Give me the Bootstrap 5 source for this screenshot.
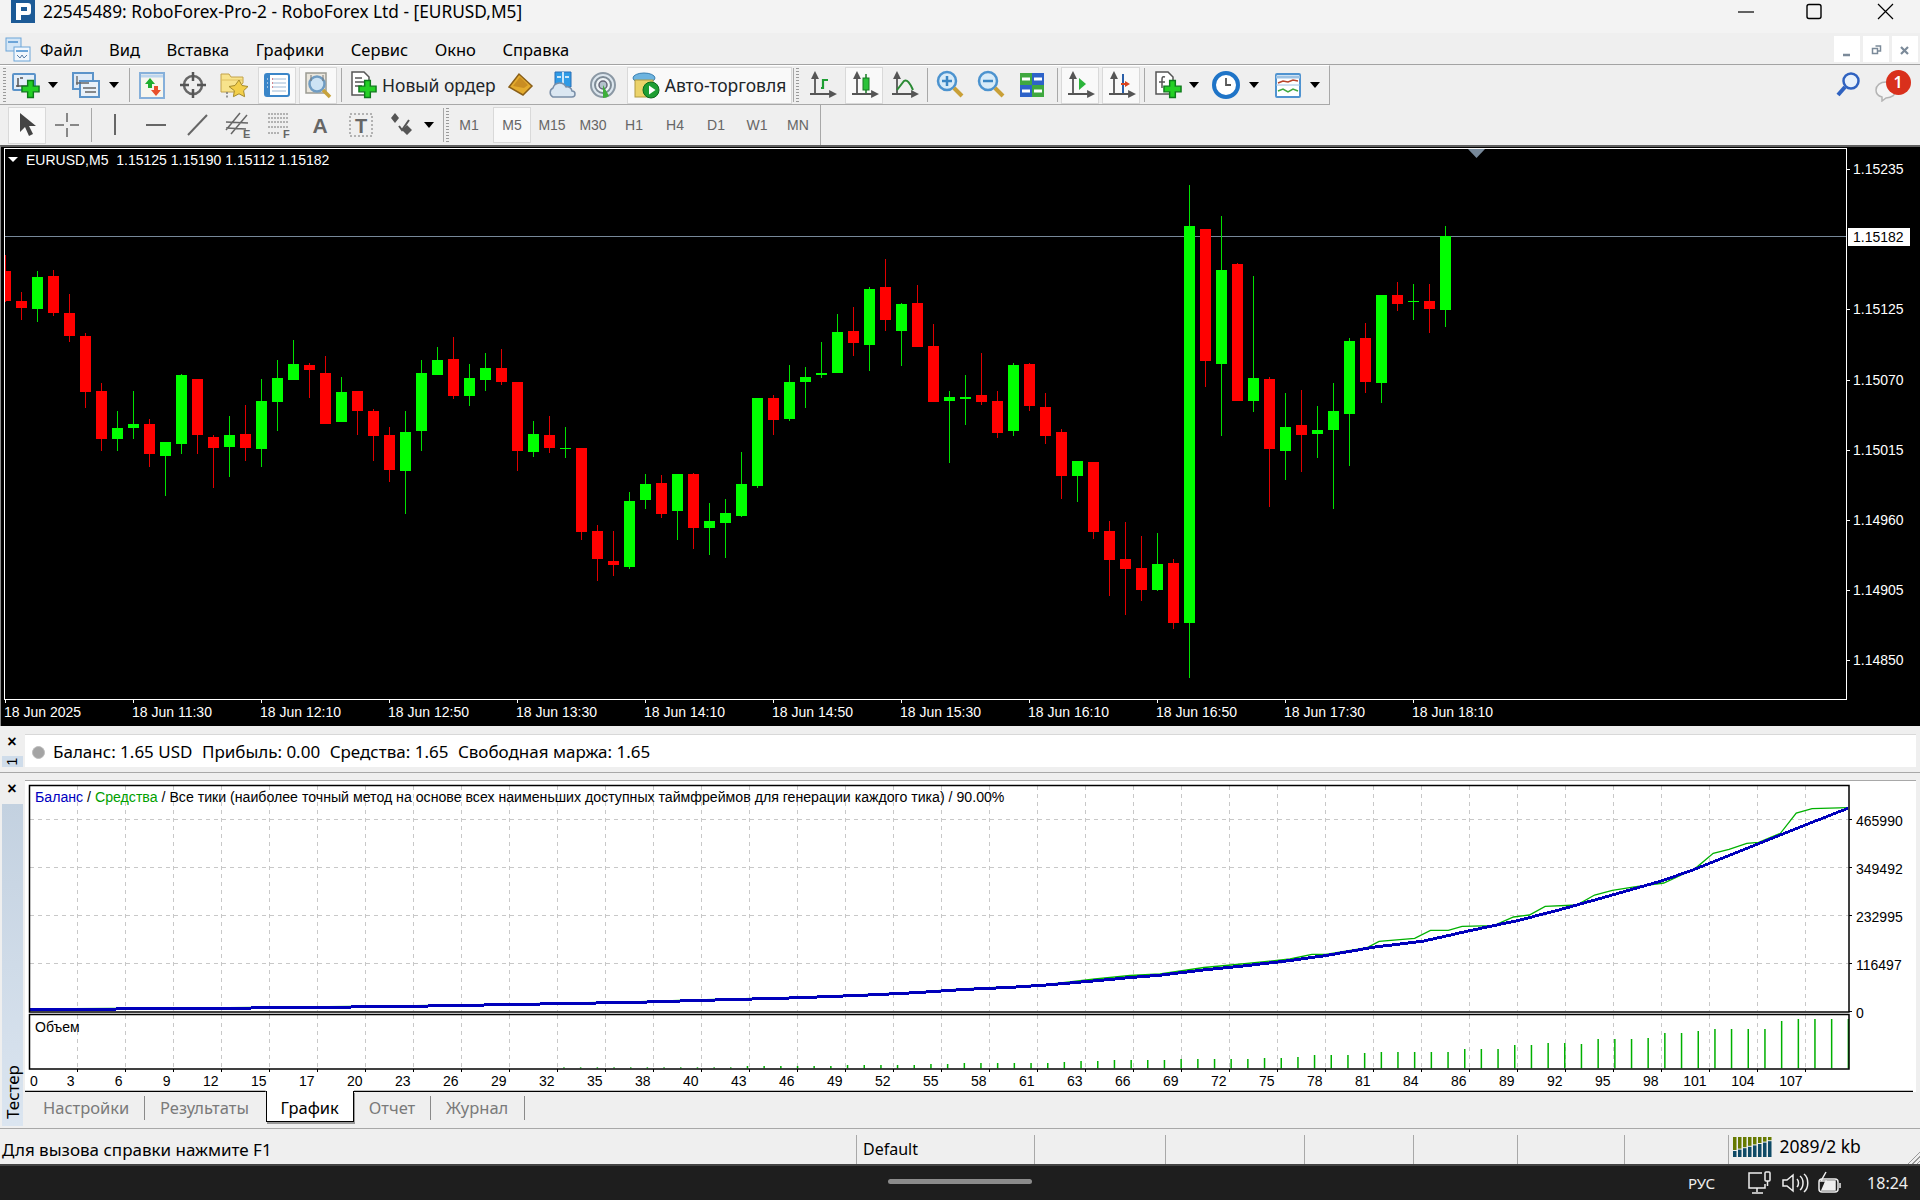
<!DOCTYPE html>
<html lang="ru">
<head>
<meta charset="UTF-8">
<title>22545489: RoboForex-Pro-2 - RoboForex Ltd - [EURUSD,M5]</title>
<link href="https://cdn.jsdelivr.net/npm/bootstrap@5.3.3/dist/css/bootstrap.min.css" rel="stylesheet">
<style>
  html, body { height: 1200px; overflow: hidden; }
  body { width: 1920px; background: #efefef; color: #000; font-family: "Noto Sans", "Liberation Sans", sans-serif; }
  .titlebar { height: 33px; background: #f3f3f3; font-size: 17.3px; line-height: 24px; }
  .logo { width: 24px; height: 23px; margin-left: 11px; background: #1c5a96; }
  .winctl svg { display: block; }
  .menubar { height: 32px; border-bottom: 1px solid #a3a3a3; position: relative; }
  .menubar .nav { gap: 26.500px; margin-left: 8px; }
  .menubar .nav-link { padding: 0; color: #000; font-size: 16.500px; line-height: 34px; }
  .mdi { width: 26px; height: 26px; background: #fff; margin-right: 3px; margin-top: 3px; }
  .mdi.last { margin-right: 2px; }
  .row-tb { height: 40px; }
  .tb1 { width: 1330px; height: 40px; border-bottom: 1px solid #a8a8a8; border-right: 1px solid #a8a8a8; border-top: 1px solid #fff; }
  .tb2 { width: 821px; height: 40px; border-right: 1px solid #a8a8a8; }
  .tb { width: 41px; height: 38px; flex: none; display: flex; align-items: center; justify-content: center; padding: 0; border: 0; border-radius: 0; }
  .tb.on { width: 38px; margin-left: 3px; height: 37px; background: #f9f9f9; border: 1px solid #d9d9d9; align-self: center; }
  .tb.w38 { width: 38px; }
  .car { width: 16px; flex: none; display: flex; align-items: center; justify-content: center; }
  .car::after { content: ""; border: 5px solid transparent; border-top: 6px solid #000; border-bottom: 0; }
  .sep { width: 1px; height: 34px; background: #a8a8a8; flex: none; align-self: center; }
  .grip { width: 3px; height: 34px; flex: none; align-self: center; background: repeating-linear-gradient(#9a9a9a 0 1px, transparent 1px 3px); }
  .tlabel { font-size: 17.5px; white-space: nowrap; }
  .tb.order { width: auto; padding: 0 5px 0 0; margin-left: 6.5px; gap: 4px; }
  .tb.auto { width: 165px; padding-left: 3px; margin-left: 3.5px; gap: 3.5px; justify-content: flex-start; }
  .s05 { margin-left: .5px; } .s1 { margin-left: 1px; } .s2 { margin-left: 2px; } .s3 { margin-left: 3px; } .s35 { margin-left: 3.5px; }
  .s4 { margin-left: 4px; } .s45 { margin-left: 4.5px; } .s55 { margin-left: 5.5px; } .s6 { margin-left: 6px; } .s65 { margin-left: 6.5px; }
  .n1 { margin-left: -1px; } .n15 { margin-left: -1.5px; } .n2 { margin-left: -2px; }
  .tb.on.s8 { margin-left: 8px; }
  .tf { width: 41px; flex: none; font: 14px "Liberation Sans", sans-serif; color: #666; text-align: center; line-height: 36px; }
  .tf.on { width: 38px; height: 36px; margin-left: 3.5px; background: #f9f9f9; border: 1px solid #d9d9d9; line-height: 34px; align-self: center; }
  .lens { margin-right: 13px; }
  .notify { position: relative; width: 46px; height: 38px; flex: none; }
  .badge-red { position: absolute; left: 11.500px; top: 3.500px; width: 25px; height: 25px; border-radius: 50%; background: #d9301c; color: #fff; font-size: 16px; line-height: 25px; text-align: center; font-weight: 600; }
  .chart { height: 581px; background: #000; border-top: 2px solid #5f5f5f; border-left: 1px solid #8c8c8c; }
  .chart svg, .tester svg { display: block; }
  .svgtxt { font-family: "Liberation Sans", sans-serif; font-size: 14px; }
  .toolbox { height: 47px; border-bottom: 1px solid #a8a8a8; }
  .lside { width: 25px; flex: none; }
  .closex { font: 700 16px/1 "Liberation Sans", sans-serif; text-align: center; width: 24px; }
  .vtab { width: 21px; margin-left: 2px; background: #cfdcea; }
  .vtab1 { height: 11px; margin-top: 6px; font: 14px/11px "Liberation Sans", sans-serif; text-align: center; }
  .vtab1 span { display: inline-block; transform: rotate(-90deg); }
  .acct { height: 33px; margin-top: 8px; margin-right: 4px; padding: 2px 0 0 7px; background: #fff; font-size: 17px; border-top: 1px solid #d8d8d8; gap: 9.500px; }
  .acct .dot { width: 13px; height: 13px; border-radius: 50%; background: #a4a4a4; border: 1px solid #bdbdbd; margin-right: -1.500px; }
  .tester { height: 353px; }
  #tester { padding-top: 7px; }
  .vtest { flex: 1; margin-top: 7px; background: linear-gradient(#dbe5f0, #c3d1e0); writing-mode: vertical-rl; transform: rotate(180deg); font-size: 17px; line-height: 22px; padding-top: 7px; color: #000; }
  .tabsrow { height: 34px; font-size: 16.5px; color: #7a7a7a; }
  .tabx { height: 24px; margin-top: 4px; line-height: 24px; border-right: 1px solid #8a8a8a; padding-left: 15px; flex: none; }
  .t1 { width: 120px; padding-left: 18px; }
  .t2 { width: 120.700px; border-right: 0; }
  .t3 { width: 77.400px; }
  .t4 { width: 94.300px; }
  .tabon { height: 31px; width: 88px; margin-top: -1px; flex: none; background: #fff; color: #000; border: 1.500px solid #000; border-top: 0; text-align: center; line-height: 33px; box-shadow: 1px 2px 0 #999; position: relative; }
  .status { height: 36px; border-top: 1px solid #a8a8a8; font-size: 16px; line-height: 33px; margin-top: 2px; position: relative; }
  .cell { border-right: 1px solid #a8a8a8; height: 29px; line-height: 29px; align-self: end; flex: none; padding-left: 6px; }
  #c1 { font-size: 17px; padding-left: 2px; }
  .netsize { font-size: 17.5px; }
  .corner { position: absolute; right: 0; bottom: 0; width: 14px; height: 14px; background: repeating-linear-gradient(135deg, transparent 0 2px, #9a9a9a 2px 3px); clip-path: polygon(100% 0, 100% 100%, 0 100%); }
  .taskbar { height: 36px; background: #1e1e1e; border-top: 2px solid #444; color: #eee; font-size: 15px; position: relative; }
  .pill { position: absolute; left: 888px; top: 13px; width: 144px; height: 5px; border-radius: 3px; background: #8b8b8b; }
</style>
</head>
<body class="d-flex flex-column">

<svg width="0" height="0" class="position-absolute">
  <defs>
    <symbol id="plus" viewBox="0 0 20 20"><path d="M7 1h6v6h6v6h-6v6H7v-6H1V7h6z" fill="#24d024" stroke="#0c7a1a" stroke-width="1.5"/></symbol>
    <symbol id="axes" viewBox="0 0 30 30"><path d="M8 4v21M3 24h24M8 3 5.500 8h5zM28 24l-5-2.500v5z" stroke="#555" stroke-width="1.800" fill="#555"/></symbol>
    <symbol id="i-new" viewBox="0 0 30 30"><rect x="3" y="4" width="22" height="16" rx="1" fill="#e4eef8" stroke="#5b93c9" stroke-width="2"/><path d="M8 8v9M6 16h11M13 8h-3" stroke="#555" stroke-width="1.500"/><use href="#plus" x="11" y="9" width="19" height="20"/></symbol>
    <symbol id="i-prof" viewBox="0 0 30 30"><rect x="2" y="3" width="20" height="16" fill="#dfeaf6" stroke="#5b93c9" stroke-width="2"/><rect x="9" y="11" width="19" height="16" fill="#e9f1f9" stroke="#5b93c9" stroke-width="2"/><path d="M6 6v9M5 13h13M12 18h13M14 22h11" stroke="#666" stroke-width="1.300"/></symbol>
    <symbol id="i-mkt" viewBox="0 0 30 30"><rect x="3" y="3" width="24" height="25" fill="#f7f6ee" stroke="#86b0da" stroke-width="2"/><path d="M4 6h22" stroke="#bcd5ee" stroke-width="3"/><path d="M13 8l5 6h-3v4h-4v-4H8z" fill="#1fae2e"/><path d="M19 26l-5-6h3v-4h4v4h3z" fill="#e8502a"/></symbol>
    <symbol id="i-cross" viewBox="0 0 30 30"><circle cx="15" cy="15" r="9" fill="none" stroke="#666" stroke-width="2.500"/><path d="M15 2v9M15 19v9M2 15h9M19 15h9" stroke="#555" stroke-width="2.500"/></symbol>
    <symbol id="i-fold" viewBox="0 0 30 30"><path d="M2 4h8l2 3h12v6l-8 9H2z" fill="#f8e38c" stroke="#c2a24a"/><path d="M2 10h22" stroke="#e0c060"/><path d="M20 10l3 5.500 6 1-4.400 4.200 1 6-5.600-2.900-5.600 2.900 1-6L10 16.500l6-1z" fill="#f3cf4a" stroke="#a58a2c"/><path d="M8 22v6" stroke="#777" stroke-dasharray="2 1.500" stroke-width="1.500"/></symbol>
    <symbol id="i-term" viewBox="0 0 30 30"><rect x="3" y="4" width="24" height="22" rx="2" fill="#fff" stroke="#3a85c8" stroke-width="2"/><rect x="3" y="4" width="5" height="22" fill="#3a85c8"/><path d="M10 9h14M10 13h14M10 17h14M10 21h14" stroke="#9db8d4"/><path d="M5 9h1M5 13h1M5 17h1" stroke="#fff"/><path d="M10 9h1M10 13h1M10 17h1" stroke="#d33"/></symbol>
    <symbol id="i-test" viewBox="0 0 30 30"><rect x="3" y="3" width="20" height="20" fill="#ebe7dd" stroke="#9a9a92" stroke-width="1.500"/><circle cx="14" cy="14" r="7.500" fill="#cde3f4" stroke="#6f9cc3" stroke-width="2.500"/><path d="M8 5v6M20 5v6" stroke="#777"/><path d="M20 20l7 7" stroke="#c7a23c" stroke-width="3.500"/></symbol>
    <symbol id="i-order" viewBox="0 0 30 30"><path d="M4 2h12l5 5v18H4z" fill="#fff" stroke="#555" stroke-width="1.500"/><path d="M7 8h7M7 12h9M7 16h7" stroke="#555" stroke-width="1.500"/><use href="#plus" x="10" y="9" width="19" height="20"/></symbol>
    <symbol id="i-book" viewBox="0 0 30 30"><path d="M3 17 13 4l13 12-9 9z" fill="#e3ab2e" stroke="#8a5f18" stroke-width="1.500"/><path d="M7 16l7-9 8 8-4 3z" fill="#c98d22"/></symbol>
    <symbol id="i-cloud" viewBox="0 0 30 30"><path d="M8 2h16v15H8z" fill="#2f9be6" stroke="#2a6fb5"/><path d="M16 2v15M10 7h4M18 7h4" stroke="#fff" stroke-width="1.500"/><path d="M6 27a5 5 0 0 1 0-9 7 7 0 0 1 13-1 5 5 0 0 1 6 4 3 3 0 0 1 0 6z" fill="#dbe7f2" stroke="#7a8fa8" stroke-width="1.500"/></symbol>
    <symbol id="i-sig" viewBox="0 0 30 30"><circle cx="15" cy="15" r="12" fill="#dce6ee" stroke="#8b98a4" stroke-width="2"/><circle cx="15" cy="15" r="8" fill="#eef3f6" stroke="#7e8b96" stroke-width="2"/><circle cx="15" cy="15" r="4" fill="#b4c2cc" stroke="#667" stroke-width="1.500"/><path d="M15 15v13a12 12 0 0 0 6-2z" fill="#3fae3c"/></symbol>
    <symbol id="i-auto" viewBox="0 0 30 30"><ellipse cx="13" cy="8" rx="11" ry="5" fill="#6db4e0" stroke="#3a7fb0"/><rect x="4" y="10" width="18" height="17" fill="#ecd36a" stroke="#b09a40"/><circle cx="20" cy="20" r="8" fill="#1e9e33" stroke="#0e6a1f"/><path d="M18 15.500v9l6.500-4.500z" fill="#fff"/></symbol>
    <symbol id="i-bars" viewBox="0 0 30 30"><use href="#axes" width="30" height="30"/><path d="M16 19v-9h5M14 18h2" stroke="#1e9e33" stroke-width="2.200" fill="none"/></symbol>
    <symbol id="i-cand" viewBox="0 0 30 30"><use href="#axes" width="30" height="30"/><path d="M17 4v19" stroke="#167a22" stroke-width="1.500"/><rect x="14" y="8" width="6" height="12" fill="#2bc23a" stroke="#167a22"/></symbol>
    <symbol id="i-line" viewBox="0 0 30 30"><use href="#axes" width="30" height="30"/><path d="M8 20 15 11c3-2 6 2 9 9" stroke="#2a8a34" stroke-width="2" fill="none"/></symbol>
    <symbol id="i-zin" viewBox="0 0 30 30"><circle cx="12" cy="11" r="9" fill="#d8ebf8" stroke="#4c93cf" stroke-width="2.500"/><path d="M7 11h10M12 6v10" stroke="#3b86c4" stroke-width="2.500"/><path d="M19 18l8 8" stroke="#c9a038" stroke-width="4"/></symbol>
    <symbol id="i-zout" viewBox="0 0 30 30"><circle cx="12" cy="11" r="9" fill="#d8ebf8" stroke="#4c93cf" stroke-width="2.500"/><path d="M7 11h10" stroke="#3b86c4" stroke-width="2.500"/><path d="M19 18l8 8" stroke="#c9a038" stroke-width="4"/></symbol>
    <symbol id="i-tile" viewBox="0 0 30 30"><rect x="3" y="3" width="12" height="12" fill="#3fa83f"/><rect x="15" y="3" width="12" height="12" fill="#2d62c8"/><rect x="3" y="15" width="12" height="12" fill="#2d62c8"/><rect x="15" y="15" width="12" height="12" fill="#3fa83f"/><path d="M5 9h8M17 9h8M5 21h8M17 21h8" stroke="#fff" stroke-width="3"/></symbol>
    <symbol id="i-scroll" viewBox="0 0 30 30"><use href="#axes" width="30" height="30"/><path d="M14 8l7 6-7 6z" fill="#2bb53a"/></symbol>
    <symbol id="i-shift" viewBox="0 0 30 30"><use href="#axes" width="30" height="30"/><path d="M17 4v19" stroke="#2a5fa8" stroke-width="2"/><path d="M24 14l-5-3v2h-4v2h4v2z" fill="#d8431f"/></symbol>
    <symbol id="i-ind" viewBox="0 0 30 30"><path d="M3 2h12l5 5v17H3z" fill="#fff" stroke="#555" stroke-width="1.500"/><path d="M12 7c-3-1-3 1-3 3v8m-3-6h6" stroke="#555" stroke-width="1.500" fill="none"/><use href="#plus" x="10" y="9" width="19" height="20"/></symbol>
    <symbol id="i-clock" viewBox="0 0 30 30"><circle cx="15" cy="15" r="12" fill="#fff" stroke="#1f74c7" stroke-width="4"/><path d="M15 8v7h5" stroke="#555" stroke-width="1.800" fill="none"/></symbol>
    <symbol id="i-tpl" viewBox="0 0 30 30"><rect x="3" y="4" width="24" height="23" rx="1" fill="#fff" stroke="#4f93d0" stroke-width="2"/><path d="M3 7h24" stroke="#9cc2e4" stroke-width="3"/><path d="M3 15h24" stroke="#9cc2e4"/><path d="M5 13l5-2 5 1 5-2 5 1" stroke="#b8452a" stroke-width="1.500" fill="none"/><path d="M5 21l5-2 5 3 5-3 5 2" stroke="#3fa83f" stroke-width="1.500" fill="none"/></symbol>
    <symbol id="i-arrow" viewBox="0 0 30 30"><path d="M8 3v19l5-5 4 9 4-2-4-8h7z" fill="#444"/></symbol>
    <symbol id="i-xh" viewBox="0 0 30 30"><path d="M15 3v9M15 18v9M3 15h9M18 15h9" stroke="#666" stroke-width="1.500"/></symbol>
    <symbol id="i-vl" viewBox="0 0 30 30"><path d="M15 4v21" stroke="#666" stroke-width="2"/></symbol>
    <symbol id="i-hl" viewBox="0 0 30 30"><path d="M5 15h20" stroke="#666" stroke-width="2"/></symbol>
    <symbol id="i-tl" viewBox="0 0 30 30"><path d="M6 25 25 5" stroke="#666" stroke-width="2"/></symbol>
    <symbol id="i-chn" viewBox="0 0 30 30"><path d="M3 20 17 3M8 24 24 5M3 12l22 1M3 18l20 1" stroke="#666" stroke-width="1.500"/><text x="20" y="28" font-family="Liberation Sans" font-size="11" font-weight="700" fill="#666">E</text></symbol>
    <symbol id="i-fib" viewBox="0 0 30 30"><path d="M4 4h20M4 8h20M4 12h20M4 17h20M4 23h12" stroke="#777" stroke-dasharray="2 1"/><text x="19" y="28" font-family="Liberation Sans" font-size="11" font-weight="700" fill="#666">F</text></symbol>
    <symbol id="i-a" viewBox="0 0 30 30"><text x="15" y="23" text-anchor="middle" font-family="Liberation Sans" font-size="21" font-weight="700" fill="#666">A</text></symbol>
    <symbol id="i-t" viewBox="0 0 30 30"><rect x="4" y="4" width="22" height="22" fill="none" stroke="#777" stroke-dasharray="2 2"/><text x="15" y="23" text-anchor="middle" font-family="Liberation Sans" font-size="20" font-weight="700" fill="#666">T</text></symbol>
    <symbol id="i-shp" viewBox="0 0 30 30"><path d="M8 3l4 5-4 5-4-5zM20 15l5 5-5 5-5-5z" fill="#555"/><path d="M12 16l3 4 7-10" stroke="#555" stroke-width="2" fill="none"/></symbol>
  </defs>
</svg>

<!-- заголовок окна -->
<div class="titlebar d-flex flex-none">
  <svg class="logo flex-none" viewBox="0 0 24 23"><path fill-rule="evenodd" d="M5 3h12a3 3 0 0 1 3 3v6a3 3 0 0 1-3 3h-7v5H5zM10 7v4h6V7z" fill="#fff"/></svg>
  <div class="ms-2">22545489: RoboForex-Pro-2 - RoboForex Ltd - [EURUSD,M5]</div>
  <div class="winctl ms-auto d-flex">
    <svg width="182" height="24" viewBox="1738 0 182 24"><path d="M1738 12h16" stroke="#000" stroke-width="1.200"/><rect x="1807" y="4.500" width="14" height="14" rx="2" fill="none" stroke="#000" stroke-width="1.400"/><path d="M1878 4l15 15M1893 4l-15 15" stroke="#000" stroke-width="1.200"/></svg>
  </div>
</div>

<!-- меню -->
<div class="menubar d-flex flex-none">
  <svg class="ms-1 mt-1 flex-none" width="28" height="26" viewBox="0 0 28 26"><rect x="2" y="1" width="15" height="13" fill="#d4e6f6" stroke="#6da5d8"/><rect x="10" y="10" width="16" height="14" fill="#f2f7fc" stroke="#6da5d8"/><path d="M4 5h10M12 14h12" stroke="#6da5d8" stroke-width="2"/><path d="M13 18l3 3 2-3 2 3 3-3" stroke="#5a7fa8" fill="none"/></svg>
  <ul class="nav">
    <li class="nav-item"><a class="nav-link" href="#">Файл</a></li>
    <li class="nav-item"><a class="nav-link" href="#">Вид</a></li>
    <li class="nav-item"><a class="nav-link" href="#">Вставка</a></li>
    <li class="nav-item"><a class="nav-link" href="#">Графики</a></li>
    <li class="nav-item"><a class="nav-link" href="#">Сервис</a></li>
    <li class="nav-item"><a class="nav-link" href="#">Окно</a></li>
    <li class="nav-item"><a class="nav-link" href="#">Справка</a></li>
  </ul>
  <div class="ms-auto d-flex">
    <div class="mdi"><svg width="26" height="26"><path d="M9 18h7" stroke="#7b8a99" stroke-width="2.500"/></svg></div>
    <div class="mdi"><svg width="26" height="26"><path d="M9.500 11.500h5v5h-5zM12.500 9h5v5h-3" fill="none" stroke="#7b8a99" stroke-width="1.500"/></svg></div>
    <div class="mdi last"><svg width="26" height="26"><path d="M9 10l7 7M16 10l-7 7" stroke="#7b8a99" stroke-width="2.200"/></svg></div>
  </div>
</div>

<!-- панели инструментов -->
<div class="row-tb d-flex flex-none">
  <div class="tb1 d-flex align-items-center">
    <div class="grip s3"></div>
    <button class="tb btn n2"><svg width="30" height="30"><use href="#i-new"/></svg></button><span class="car"></span>
    <button class="tb btn s4"><svg width="30" height="30"><use href="#i-prof"/></svg></button><span class="car"></span>
    <span class="sep s65"></span>
    <button class="tb btn s2"><svg width="30" height="30"><use href="#i-mkt"/></svg></button>
    <button class="tb btn"><svg width="30" height="30"><use href="#i-cross"/></svg></button>
    <button class="tb btn"><svg width="30" height="30"><use href="#i-fold"/></svg></button>
    <button class="tb btn on"><svg width="30" height="30"><use href="#i-term"/></svg></button>
    <button class="tb btn on"><svg width="30" height="30"><use href="#i-test"/></svg></button>
    <span class="sep s4"></span>
    <button class="tb btn order"><svg width="30" height="30"><use href="#i-order"/></svg><span class="tlabel">Новый ордер</span></button>
    <button class="tb btn"><svg width="30" height="30"><use href="#i-book"/></svg></button>
    <button class="tb btn"><svg width="30" height="30"><use href="#i-cloud"/></svg></button>
    <button class="tb btn"><svg width="30" height="30"><use href="#i-sig"/></svg></button>
    <button class="tb btn on auto"><svg width="30" height="30"><use href="#i-auto"/></svg><span class="tlabel">Авто-торговля</span></button>
    <span class="sep s1"></span>
    <div class="grip s2"></div>
    <button class="tb btn s2"><svg width="30" height="30"><use href="#i-bars"/></svg></button>
    <button class="tb btn on"><svg width="30" height="30"><use href="#i-cand"/></svg></button>
    <button class="tb btn"><svg width="30" height="30"><use href="#i-line"/></svg></button>
    <span class="sep s3"></span>
    <button class="tb btn s1"><svg width="30" height="30"><use href="#i-zin"/></svg></button>
    <button class="tb btn"><svg width="30" height="30"><use href="#i-zout"/></svg></button>
    <button class="tb btn"><svg width="30" height="30"><use href="#i-tile"/></svg></button>
    <span class="sep s45"></span>
    <button class="tb btn on"><svg width="30" height="30"><use href="#i-scroll"/></svg></button>
    <button class="tb btn on"><svg width="30" height="30"><use href="#i-shift"/></svg></button>
    <span class="sep s4"></span>
    <button class="tb btn w38 s4"><svg width="30" height="30"><use href="#i-ind"/></svg></button><span class="car n1"></span>
    <button class="tb btn s4"><svg width="30" height="30"><use href="#i-clock"/></svg></button><span class="car n1"></span>
    <button class="tb btn s55"><svg width="30" height="30"><use href="#i-tpl"/></svg></button><span class="car n15"></span>
  </div>
  <div class="flex-fill d-flex justify-content-end align-items-center">
    <svg class="lens" width="26" height="28" viewBox="0 0 26 28"><circle cx="16" cy="10" r="7.500" fill="#e8f1fb" stroke="#2f62c0" stroke-width="2.500"/><path d="M10 16l-7 8" stroke="#2f62c0" stroke-width="4"/></svg>
    <div class="notify"><svg width="34" height="36" viewBox="0 0 34 36"><path d="M12 16c6 0 10 3.500 10 8s-4 8-10 8l-4 3v-4c-4-1-6-4-6-7 0-4.500 4-8 10-8z" fill="#f5f5f5" stroke="#b4b4b4" stroke-width="1.500"/></svg><span class="badge-red">1</span></div>
  </div>
</div>
<div class="row-tb d-flex flex-none">
  <div class="tb2 d-flex align-items-center">
    <button class="tb btn on s8"><svg width="30" height="30"><use href="#i-arrow"/></svg></button>
    <button class="tb btn s05"><svg width="30" height="30"><use href="#i-xh"/></svg></button>
    <span class="sep s35"></span>
    <button class="tb btn s2"><svg width="30" height="30"><use href="#i-vl"/></svg></button>
    <button class="tb btn"><svg width="30" height="30"><use href="#i-hl"/></svg></button>
    <button class="tb btn"><svg width="30" height="30"><use href="#i-tl"/></svg></button>
    <button class="tb btn"><svg width="30" height="30"><use href="#i-chn"/></svg></button>
    <button class="tb btn"><svg width="30" height="30"><use href="#i-fib"/></svg></button>
    <button class="tb btn"><svg width="30" height="30"><use href="#i-a"/></svg></button>
    <button class="tb btn"><svg width="30" height="30"><use href="#i-t"/></svg></button>
    <button class="tb btn"><svg width="30" height="30"><use href="#i-shp"/></svg></button><span class="car n15"></span>
    <span class="sep s6"></span>
    <div class="grip s2"></div>
    <span class="tf">M1</span><span class="tf on">M5</span><span class="tf s05">M15</span><span class="tf">M30</span><span class="tf">H1</span><span class="tf">H4</span><span class="tf">D1</span><span class="tf">W1</span><span class="tf">MN</span>
  </div>
</div>

<!-- график -->
<div class="chart flex-none" id="chart"></div>

<!-- панель счёта -->
<div class="toolbox d-flex flex-none">
  <div class="lside d-flex flex-column">
    <div class="closex mt-2">×</div>
    <div class="vtab vtab1"><span>1</span></div>
  </div>
  <div class="acct flex-fill d-flex align-items-center">
    <span class="dot"></span><span>Баланс: 1.65 USD</span><span>Прибыль: 0.00</span><span>Средства: 1.65</span><span>Свободная маржа: 1.65</span>
  </div>
</div>

<!-- тестер -->
<div class="tester d-flex flex-none">
  <div class="lside d-flex flex-column">
    <div class="closex mt-2">×</div>
    <div class="vtab vtest">Тестер</div>
  </div>
  <div class="flex-fill">
    <div id="tester"></div>
    <div class="tabsrow d-flex">
      <div class="tabx t1">Настройки</div><div class="tabx t2">Результаты</div>
      <div class="tabon">График</div>
      <div class="tabx t3">Отчет</div><div class="tabx t4">Журнал</div>
    </div>
  </div>
</div>

<!-- строка состояния -->
<div class="status d-flex flex-none">
  <div class="cell" id="c1">Для вызова справки нажмите F1</div>
</div>

<div class="taskbar flex-none"><span class="pill"></span></div>

<script>
  // координаты снимались с увеличенных фрагментов: y = base + z / 3
  const first = [
    [0,45,93,183,185],[0,156,183,204,240],[1,93,111,207,246],[0,90,108,219,228],[0,162,219,288,306],[0,279,288,456,504],[0,429,453,597,633],[1,513,564,597,633],[1,453,552,564,597],[0,537,552,642,681],
    [1,606,606,648,768],[1,402,405,612,642],[0,417,417,585,642],[0,585,591,624,744],[1,528,585,621,711],[0,495,582,624,663],[1,417,483,627,681],[1,360,414,486,573],[1,300,372,420,420],[0,369,375,390,474],
    [0,348,399,552,552],[1,411,456,546,546],[0,453,453,513,585],[0,507,513,588,663],[0,561,585,690,726],[1,513,576,693,822],[1,360,399,573,633],[1,321,360,405,405],[0,291,357,468,477],[1,372,414,468,498],
    [1,339,384,420,453],[0,327,384,426,435],[0,426,426,633,693],[1,543,582,636,651],[0,528,585,624,639],[1,561,624,627,654],[0,624,624,876,900],[0,855,873,957,1023],[0,873,963,975,1008],[1,756,783,981,987],
    [1,702,732,780,807],[0,705,729,822,834],[1,702,702,813,900],[0,699,702,864,927],[1,789,843,864,945],[1,777,819,849,954],[1,636,732,828,831],[1,474,474,738,744],[0,465,474,540,585],[1,375,426,537,543],
    [1,381,411,426,504],[1,306,399,405,414],[1,222,276,399,399],[0,201,273,309,348],[1,141,147,315,393],[0,57,141,240,273],[1,189,192,273,378],[0,135,189,321,321],[0,252,318,486,486],[1,453,471,483,669],
    [1,405,471,477,555],[0,339,465,486,495],[0,453,483,579,594],[1,369,375,573,588],[0,369,372,498,513],[0,459,501,588,612],[0,567,576,708,777],[1,663,663,708,786],[0,666,666,876,897]
  ];
  const second = [
    [0,1053,1083,1170,1278],[0,1056,1167,1197,1335],[0,1098,1194,1260,1293],[1,1089,1182,1260,1263],[0,1167,1179,1359,1377],[1,45,168,1359,1524],[0,177,177,573,651],[1,138,300,582,798],[0,279,282,693,693],[1,318,624,693,726],
    [0,621,627,837,1011],[1,669,771,843,930],[0,660,765,795,906],[1,708,780,792,864],[1,639,723,780,1017],[1,504,513,732,888],[0,459,504,636,669],[1,375,375,639,699],[0,336,375,402,423],[1,342,393,396,450],
    [0,342,393,417,489],[1,168,198,420,471]
  ];
  const candles = first.map(c => [c[0], ...c.slice(1).map(z => 240 + z / 3)])
    .concat(second.map(c => [c[0], ...c.slice(1).map(z => 170 + z / 3)]));

  let s = '<svg width="1919" height="579" viewBox="1 147 1919 579" class="svgtxt">';
  s += '<defs><clipPath id="plot"><rect x="5" y="149" width="1841" height="550"/></clipPath></defs><g clip-path="url(#plot)" shape-rendering="crispEdges">';
  s += '<rect x="5" y="236" width="1841" height="1" fill="#778899"/>';
  candles.forEach((c, i) => {
    const x = 5 + 16 * i, col = c[0] ? '#00ff00' : '#ff0000', wick = c[0] ? '#00e000' : '#e00000';
    s += `<rect x="${x}" y="${c[1]}" width="1" height="${c[4] - c[1]}" fill="${wick}"/>`;
    s += `<rect x="${x - 5}" y="${c[2]}" width="11" height="${Math.max(c[3] - c[2], 1)}" fill="${col}"/>`;
  });
  s += '</g><rect x="4.500" y="148.500" width="1842" height="551" fill="none" stroke="#fff"/>';
  s += '<path d="M1468 149h17l-8.500 9z" fill="#778899"/><path d="M8 157h10l-5 5z" fill="#fff"/>';
  s += '<text x="26" y="165" fill="#fff">EURUSD,M5&#160; 1.15125 1.15190 1.15112 1.15182</text>';
  ['1.15235', '', '1.15125', '1.15070', '1.15015', '1.14960', '1.14905', '1.14850'].forEach((t, i) => {
    if (!t) return;
    const y = 169 + i * 70.2;
    s += `<rect x="1847" y="${Math.round(y)}" width="3" height="1" fill="#fff"/><text x="1853" y="${y + 5}" fill="#fff">${t}</text>`;
  });
  s += '<rect x="1848" y="228" width="62" height="18" fill="#fff"/><text x="1853" y="242" fill="#000">1.15182</text>';
  ['18 Jun 2025', '18 Jun 11:30', '18 Jun 12:10', '18 Jun 12:50', '18 Jun 13:30', '18 Jun 14:10', '18 Jun 14:50', '18 Jun 15:30', '18 Jun 16:10', '18 Jun 16:50', '18 Jun 17:30', '18 Jun 18:10'].forEach((t, i) => {
    const x = 5 + 128 * i;
    s += `<rect x="${x}" y="700" width="1" height="3" fill="#fff"/><text x="${x - 1}" y="717" fill="#fff">${t}</text>`;
  });
  document.getElementById('chart').innerHTML = s + '</svg>';

  // кривая баланса и средств
  const bal = [[30,1009],[200,1008],[400,1006],[640,1001.7],[696,1000],[796,997.3],[863,994.7],[913,992.3],[963,989],[1013,986.7],[1048,984.3],[1095,980.3],[1130,977],[1160,974.7],[1204,969.3],[1247,965],[1290,960],[1325.7,955],[1373,946.7],[1422.6,940.7],[1470,930],[1517.5,920],[1565,907.7],[1613.6,894],[1661.4,880.3],[1695.4,868.3],[1757.5,843.3],[1805.3,824.3],[1847.6,807.7]];
  const eqZ = [[30,523],[65,523],[170,503],[200,484],[290,475],[330,451],[375,451],[410,439],[490,437],[540,411],[580,405],[620,379],[700,375],[745,345],[790,331],[850,320],[920,309],[1000,265],[1045,220],[1085,208],[1130,190],[1160,187],[1215,160],[1255,99],[1295,86],[1385,83]];
  const eq = bal.slice(0, 11).concat([[1095,979],[1130,975.5],[1160,974],[1204,967.5],[1247,963.5],[1290,959]]).concat(eqZ.map(p => [1300 + p[0] / 2.529, 780 + p[1] / 3]));
  const volZ = [717,717,717,717,723,747,747,747,747,753,759,759,774,777,777,777,792,789,789,795,795,807,807,807,816,816,816,816,816,819,825,825];
  const volY = volZ.map(z => 780 + z / 3).concat([465,471,474,474,477,477,477,477,477,480,480,480,480,483,483,486,489,489,489,489,489,489,492,492,495,495,495,495,495,498,498,498,498,498,498,502,502,502,502,502,502,502,502,502,502,502].map(z => 900 + z / 3));

  // баланс рисуем ступеньками по 1 px, как в терминале
  let balPath = '';
  for (let i = 0, x = 30; x < 1848; x++) {
    while (i < bal.length - 2 && x > bal[i + 1][0]) i++;
    const a = bal[i], b = bal[i + 1];
    const y = Math.round(a[1] + (b[1] - a[1]) * (x - a[0]) / (b[0] - a[0]));
    balPath += `M${x} ${y - 1}h1v2.500h-1z`;
  }

  let t = '<svg width="1895" height="312" viewBox="25 780 1895 312" class="svgtxt">';
  t += '<rect x="25" y="780" width="1891" height="312" fill="#fff"/><rect x="25" y="780" width="1891" height="1" fill="#a8a8a8"/>';
  t += '<g stroke="#c8c8c8" stroke-dasharray="4 4" shape-rendering="crispEdges">';
  for (let k = 0; k < 37; k++) { const x = 77.5 + 48 * k; t += `<path d="M${x} 786V1011M${x} 1015V1068"/>`; }
  [819.5, 867.5, 915.5, 963.5].forEach(y => { t += `<path d="M30 ${y}H1848"/>`; });
  t += '</g>';
  t += `<polyline points="${eq.join(' ')}" fill="none" stroke="#00b000" stroke-width="1.300"/>`;
  t += `<path d="${balPath}" fill="#0000bb" shape-rendering="crispEdges"/>`;
  volY.forEach((y, k) => { t += `<rect x="${(1847.6 - 16.68 * k).toFixed(1)}" y="${y}" width="1.500" height="${1068.3 - y}" fill="#00b000"/>`; });
  t += '<g fill="none" stroke="#000" stroke-width="1.500"><rect x="29.500" y="785.500" width="1819.500" height="226.500"/><rect x="29.500" y="1014.500" width="1819.500" height="54.500"/></g>';
  t += '<path d="M25 1091.500H265.700M354 1091.500H1913" stroke="#000" stroke-width="1.500"/>';
  t += '<text x="35" y="802" font-size="14.150"><tspan fill="#0000c0">Баланс</tspan> / <tspan fill="#00a000">Средства</tspan> / Все тики (наиболее точный метод на основе всех наименьших доступных таймфреймов для генерации каждого тика) / 90.00%</text>';
  t += '<text x="35" y="1032">Объем</text>';
  [['465990',819],['349492',867],['232995',915],['116497',963],['0',1011]].forEach(r => {
    t += `<rect x="1849" y="${r[1]}" width="3" height="1"/><text x="1856" y="${r[1] + 7}">${r[0]}</text>`;
  });
  t += '<text x="30" y="1086">0</text>';
  ['3','6','9','12','15','17','20','23','26','29','32','35','38','40','43','46','49','52','55','58','61','63','66','69','72','75','78','81','84','86','89','92','95','98','101','104','107'].forEach((l, k) => {
    const x = 77.5 + 48 * k;
    t += `<rect x="${x - 0.5}" y="1069" width="1" height="3"/><text x="${x - 3}" y="1086" text-anchor="end">${l}</text>`;
  });
  document.getElementById('tester').innerHTML = t + '</svg>';

  // ячейки строки состояния
  const status = document.querySelector('.status');
  const cells = [['', 857], ['Default', 1035], ['', 1166], ['', 1305], ['', 1414], ['', 1518], ['', 1625], ['', 1728.6]];
  document.getElementById('c1').style.width = cells[0][1] + 'px';
  cells.slice(1).forEach((c, i) => {
    const d = document.createElement('div');
    d.className = 'cell';
    d.style.width = (c[1] - cells[i][1]) + 'px';
    d.textContent = c[0];
    status.appendChild(d);
  });
  const net = document.createElement('div');
  net.className = 'd-flex align-items-center gap-2 ps-1 netsize';
  let bars = '';
  for (let i = 0; i < 8; i++) {
    const h = 6 + i * 1.4;
    bars += `<rect x="${i * 5}" y="0" width="3.500" height="${20 - h - 1}" fill="#667a00"/><rect x="${i * 5}" y="${20 - h}" width="3.500" height="${h}" fill="#0f4a66"/>`;
  }
  net.innerHTML = `<svg width="39" height="20">${bars}</svg><span>2089/2 kb</span>`;
  status.appendChild(net);
  const corner = document.createElement('span');
  corner.className = 'corner';
  status.appendChild(corner);

  // системный трей
  document.querySelector('.taskbar').insertAdjacentHTML('beforeend', `
    <div class="d-flex align-items-center h-100 position-absolute top-0 end-0">
      <span class="me-4 pe-2">РУС</span>
      <svg class="me-2" width="26" height="26" viewBox="0 0 26 26" fill="none" stroke="#eee" stroke-width="1.500"><path d="M15 3H2v15h16v-4M10 18v4M5 23h11"/><rect x="18" y="2" width="5" height="9" rx="1"/><path d="M20.500 11v5"/></svg>
      <svg class="me-2" width="28" height="24" viewBox="0 0 28 24" fill="none" stroke="#eee" stroke-width="1.500"><path d="M2 9h4l6-5v16l-6-5H2zM16 8c2 2 2 6 0 8M19 5c4 3 4 11 0 14M23 3c5 4 5 14 0 18"/></svg>
      <svg class="me-4" width="26" height="24" viewBox="0 0 26 24" fill="none" stroke="#eee" stroke-width="1.500"><rect x="2" y="8" width="19" height="13" rx="3"/><path d="M23 12v5"/><path d="M9 1 4 10h5l-1 4" /><path d="M5 19l4-9h9v9z" fill="#eee"/></svg>
      <span class="me-2 pe-1 fs-6">18:24</span>
    </div>`);
</script>
<script src="https://cdn.jsdelivr.net/npm/bootstrap@5.3.3/dist/js/bootstrap.bundle.min.js"></script>
</body>
</html>
